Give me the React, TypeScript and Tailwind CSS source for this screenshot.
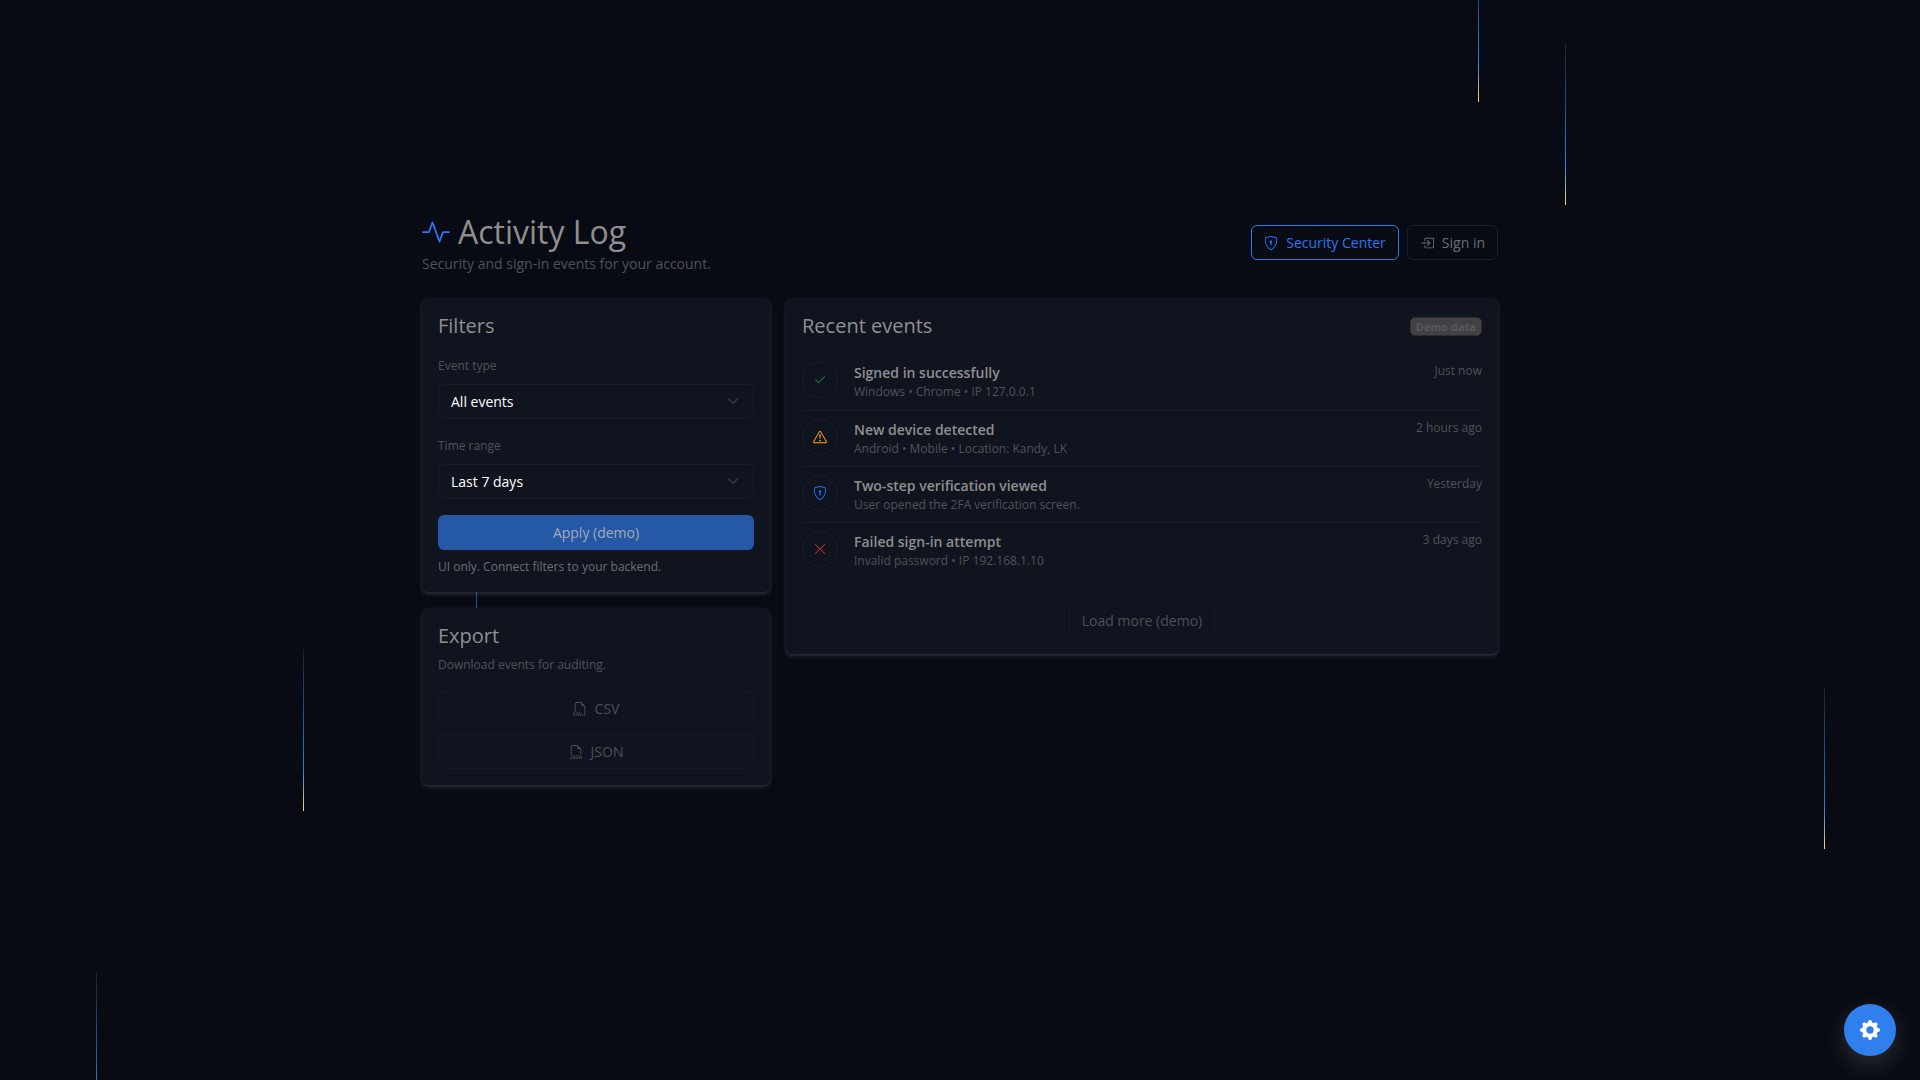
import { useState } from "react";
import type { ReactNode } from "react";
import {
  BsActivity,
  BsBoxArrowInRight,
  BsCheck2,
  BsExclamationTriangle,
  BsFiletypeCsv,
  BsFiletypeJson,
  BsGearFill,
  BsShieldLock,
  BsXLg,
} from "react-icons/bs";

const events = [
  {
    title: "Signed in successfully",
    meta: "Windows • Chrome • IP 127.0.0.1",
    time: "Just now",
    icon: <BsCheck2 className="text-[#198754]" />,
  },
  {
    title: "New device detected",
    meta: "Android • Mobile • Location: Kandy, LK",
    time: "2 hours ago",
    icon: <BsExclamationTriangle className="text-[#ffa426]" />,
  },
  {
    title: "Two-step verification viewed",
    meta: "User opened the 2FA verification screen.",
    time: "Yesterday",
    icon: <BsShieldLock className="text-[#2970f5]" />,
  },
  {
    title: "Failed sign-in attempt",
    meta: "Invalid password • IP 192.168.1.10",
    time: "3 days ago",
    icon: <BsXLg className="text-[#dc2c48]" />,
  },
];

// falling light streaks behind the page
const streaks = [
  "left-[5%] top-[973px]",
  "left-[15.8%] top-[649px]",
  "left-[24.8%] top-[540px]",
  "left-[77%] -top-[60px]",
  "left-[81.5%] top-[43px]",
  "left-[95%] top-[687px]",
];

const Card = ({ children }: { children: ReactNode }) => (
  <section className="rounded-md bg-[#10141e] p-4 shadow-[0_0_2px_rgba(255,255,255,0.06),0_2px_4px_rgba(255,255,255,0.15)]">
    {children}
  </section>
);

const Chevron = () => (
  <svg
    className="pointer-events-none absolute right-[15px] top-[11px] size-3"
    viewBox="0 0 16 16"
    fill="none"
    stroke="#343a45"
    strokeWidth="2"
    strokeLinecap="round"
    strokeLinejoin="round"
  >
    <path d="m2 5 6 6 6-6" />
  </svg>
);

type SelectProps = {
  id: string;
  label: string;
  value: string;
  options: string[];
  onChange: (value: string) => void;
};

const SelectField = ({ id, label, value, options, onChange }: SelectProps) => (
  <div>
    <label htmlFor={id} className="mb-2 block text-xs leading-[21px] text-[#4f5359]">
      {label}
    </label>
    <div className="relative">
      <select
        id={id}
        value={value}
        onChange={(e) => onChange(e.target.value)}
        className="h-[35px] w-full appearance-none rounded-md border border-[#191e2a] bg-[#10141e] px-3 text-sm text-white"
      >
        {options.map((o) => (
          <option key={o}>{o}</option>
        ))}
      </select>
      <Chevron />
    </div>
  </div>
);

export default function App() {
  const [type, setType] = useState("All events");
  const [range, setRange] = useState("Last 7 days");

  return (
    <div className="relative isolate min-h-screen bg-[#080b13] font-['Open_Sans','Noto_Sans',sans-serif] text-sm text-[#8f8f8f]">
      <div className="absolute inset-0 -z-10 overflow-hidden" aria-hidden="true">
        {streaks.map((pos) => (
          <span
            key={pos}
            className={`absolute h-[162px] w-px bg-[linear-gradient(to_bottom,#1c212c,#2c7be5_75%,#ffd966)] ${pos}`}
          />
        ))}
      </div>

      <main className="mx-auto max-w-[1108px] px-4 pt-[211px] pb-16">
        <header className="mb-6 flex items-center justify-between">
          <div>
            <h1 className="flex items-center gap-2 text-[32px] leading-[42px]">
              <BsActivity className="size-7 text-[#2976f2]" />
              Activity Log
            </h1>
            <p className="leading-[21px] text-[#4f5359]">
              Security and sign-in events for your account.
            </p>
          </div>
          <div className="flex gap-2">
            <a
              href="#security"
              className="flex h-[35px] items-center gap-2 rounded-md border border-[#2c7be5] px-3 text-[#2976f2]"
            >
              <BsShieldLock />
              Security Center
            </a>
            <a
              href="#signin"
              className="flex h-[35px] items-center gap-2 rounded-md border border-[#191e2a] px-3 text-[#6a6e74]"
            >
              <BsBoxArrowInRight />
              Sign in
            </a>
          </div>
        </header>

        <div className="grid grid-cols-[348fr_712fr] items-start gap-4">
          <div className="flex flex-col gap-4">
            <Card>
              <h2 className="mb-[17px] text-xl leading-6">Filters</h2>
              <form className="flex flex-col" onSubmit={(e) => e.preventDefault()}>
                <SelectField
                  id="event-type"
                  label="Event type"
                  value={type}
                  options={["All events", "Sign-ins", "Security", "Devices"]}
                  onChange={setType}
                />
                <div className="mt-4">
                  <SelectField
                    id="time-range"
                    label="Time range"
                    value={range}
                    options={["Last 24 hours", "Last 7 days", "Last 30 days"]}
                    onChange={setRange}
                  />
                </div>
                <button
                  type="submit"
                  className="mt-4 h-[35px] rounded-md bg-[#2558a5] font-medium text-[#a3aab8]"
                >
                  Apply (demo)
                </button>
              </form>
              <p className="mt-2 text-xs leading-[18px] text-[#6b6f74]">
                UI only. Connect filters to your backend.
              </p>
            </Card>

            <Card>
              <h2 className="mb-2 text-xl leading-6">Export</h2>
              <p className="mb-[17px] text-xs leading-[18px] text-[#4f5359]">
                Download events for auditing.
              </p>
              <div className="flex flex-col gap-2 text-[#4c5057]">
                <button className="flex h-[35px] items-center justify-center gap-2 rounded-md border border-[#151a25]">
                  <BsFiletypeCsv />
                  CSV
                </button>
                <button className="flex h-[35px] items-center justify-center gap-2 rounded-md border border-[#151a25]">
                  <BsFiletypeJson />
                  JSON
                </button>
              </div>
            </Card>
          </div>

          <Card>
            <div className="mb-6 flex items-center justify-between">
              <h2 className="text-xl leading-6">Recent events</h2>
              <span className="rounded-[5px] border border-[#2b2d33] bg-[#424242] px-[5px] text-[11px] leading-[17px] font-bold text-[#555a62]">
                Demo data
              </span>
            </div>
            <ul className="divide-y divide-[#191e2a]">
              {events.map((ev) => (
                <li
                  key={ev.title}
                  className="flex items-start gap-4 py-2 first:pt-0 first:pb-[9px]"
                >
                  <span className="flex size-9 shrink-0 items-center justify-center rounded-full border border-[#191e2a] text-sm">
                    {ev.icon}
                  </span>
                  <div className="grow">
                    <h3 className="leading-[21px] font-semibold">{ev.title}</h3>
                    <p className="text-xs leading-[18px] text-[#4f5359]">{ev.meta}</p>
                  </div>
                  <time className="text-xs leading-[18px] text-[#4f5359]">{ev.time}</time>
                </li>
              ))}
            </ul>
            <div className="mt-[25px] flex justify-center">
              <button className="h-[35px] rounded-md border border-[#151a25] px-3 text-[#4c5057]">
                Load more (demo)
              </button>
            </div>
          </Card>
        </div>
      </main>

      <button
        aria-label="Settings"
        className="fixed right-6 bottom-6 flex size-[52px] items-center justify-center rounded-full bg-[#2f80ed] text-white shadow-[0_8px_24px_rgba(255,255,255,0.15)]"
      >
        <BsGearFill className="size-5" />
      </button>
    </div>
  );
}
